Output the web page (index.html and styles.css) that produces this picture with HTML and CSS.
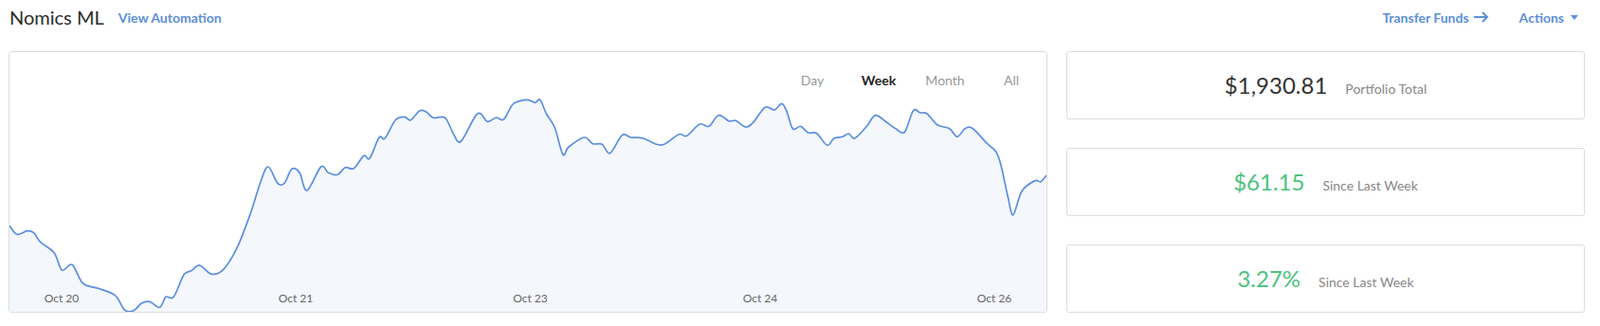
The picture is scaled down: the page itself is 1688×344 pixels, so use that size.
FILE: index.html
```html
<!DOCTYPE html>
<html lang="en">
<head>
  <meta charset="UTF-8">
  <title>Nomics ML</title>
  <link rel="stylesheet" href="styles.css">
</head>
<body>
  <div class="page">
    <header class="topbar">
      <h1 class="title">Nomics ML</h1>
      <a class="link view-link" href="#">View Automation</a>
      <div class="topbar-right">
        <a class="link transfer" href="#">Transfer Funds
          <svg width="16" height="12" viewBox="0 0 16 12"><path d="M0 6H14M9 1L14 6L9 11" fill="none" stroke="#5b8fdc" stroke-width="2"/></svg>
        </a>
        <a class="link actions" href="#">Actions <span class="caret"></span></a>
      </div>
    </header>

    <div class="grid">
      <div class="chart">
        <svg class="chart-svg" viewBox="0 0 1094 274" preserveAspectRatio="none">
          <path class="area" d=""/>
          <path class="line" d="M0 183.3 L7.9 192.3 L18.6 188.7 L25.7 190.7 L32.9 200.7 L47.1 211.7 L55.4 230 L66.1 224.3 L77.5 244 L93.6 249.3 L111.4 256.7 L121.4 272 L131.1 272.7 L139.3 265 L147.9 263.3 L158.6 269.3 L165 258.3 L173.2 258.3 L183.9 235 L191.8 230.7 L200.7 225 L213.2 234.3 L225.7 229.3 L240 206.7 L254.3 170 L265 136.7 L272.9 121 L282.9 138.3 L290 138.3 L297.9 123.3 L306.1 127.3 L313.9 146 L328.6 121 L336.4 127.3 L346.1 129.3 L354.3 121.7 L363.2 122.7 L373.9 109.3 L380 112 L390 90 L396.1 91 L407.1 71.7 L416.8 68.3 L423.2 71.7 L432.9 61.7 L440 63.3 L447.1 69.3 L459.6 69.3 L468.6 86.7 L476.4 94 L493.6 65 L504.3 73.3 L513.2 69 L521.4 71 L531.1 55 L541.8 50.7 L548.2 50.7 L554.7 53.3 L559.8 50.3 L566.4 65 L575.4 80 L583.8 108 L590 100 L606.3 90 L615.4 96.7 L625.2 97.3 L633.6 106.7 L646.3 87.7 L655.4 90 L668.1 90.7 L682.7 97.3 L691.8 96.7 L706.3 86.7 L714.7 88.3 L728.1 76 L737.9 78.3 L748.1 66.7 L759 72.7 L766.3 72.3 L776.5 79 L784.5 74.3 L797.2 58.3 L807 61 L814.6 54.3 L819.7 61.7 L826.3 80.7 L834.6 78.3 L842.6 85 L851.7 85.7 L862.6 98.3 L869.9 91 L879 89.3 L885.5 86 L891.7 91 L904.4 78.3 L913.5 66.7 L924.4 73.3 L935.3 81 L944.4 84.3 L953.5 61.7 L960.8 64 L968 65 L978.9 76.7 L991.7 80.7 L1000 89.3 L1008 80.7 L1016.4 80.7 L1031.6 96.7 L1040.7 105 L1046.2 120 L1053.5 153.3 L1058.9 171.7 L1068 146.7 L1081.8 135.7 L1088 136.7 L1094 130"/>
          <g class="axis">
            <text x="55" y="264">Oct 20</text>
            <text x="302" y="264">Oct 21</text>
            <text x="549.5" y="264">Oct 23</text>
            <text x="792" y="264">Oct 24</text>
            <text x="1039" y="264">Oct 26</text>
          </g>
        </svg>
        <nav class="periods">
          <a class="period" href="#">Day</a>
          <a class="period active" href="#">Week</a>
          <a class="period" href="#">Month</a>
          <a class="period" href="#">All</a>
        </nav>
      </div>

      <div class="stats">
        <div class="stat">
          <span class="stat-value">$1,930.81</span>
          <span class="stat-label">Portfolio Total</span>
        </div>
        <div class="stat">
          <span class="stat-value up">$61.15</span>
          <span class="stat-label">Since Last Week</span>
        </div>
        <div class="stat">
          <span class="stat-value up">3.27%</span>
          <span class="stat-label">Since Last Week</span>
        </div>
      </div>
    </div>
  </div>
  <script src="chart.js"></script>
</body>
</html>
```

FILE: styles.css
```css
body{
  margin:0;
  font-family:Lato,"Open Sans",sans-serif;
  color:#333;
  background:#fff;
}

.page{
  padding:0 16px 0 9px;
}

/* Kopfzeile */
.topbar{
  display:flex;
  align-items:center;
  height:54px;
  padding-bottom:18px;
  box-sizing:border-box;
}
.title{
  margin:0 0 0 1px;
  font-size:20px;
  font-weight:400;
  color:#2b2b2b;
}
.link{
  color:#5b8fdc;
  font-size:14px;
  font-weight:700;
  text-decoration:none;
}
.view-link{
  margin-left:15px;
}
.topbar-right{
  margin-left:auto;
  margin-right:7px;
  display:flex;
  align-items:center;
}
.transfer{
  display:flex;
  align-items:center;
  gap:5px;
}
.actions{
  margin-left:32px;
  display:flex;
  align-items:center;
  gap:3px;
}
.caret{
  width:0;
  height:0;
  margin-left:4px;
  border-left:4.5px solid transparent;
  border-right:4.5px solid transparent;
  border-top:5px solid #5b8fdc;
}

/* Raster: Chart links, Kennzahlen rechts */
.grid{
  display:grid;
  grid-template-columns:1096px 1fr;
  gap:20px;
  height:276px;
}

.chart{
  position:relative;
  border:1px solid #ddd;
  border-radius:3px;
  overflow:hidden;
}
.chart-svg{
  display:block;
  width:100%;
  height:100%;
}
.area{
  fill:#f4f7fc;
}
.line{
  fill:none;
  stroke:#5b8fe0;
  stroke-width:1.7;
  stroke-linejoin:round;
}
.axis text{
  font-family:Lato,sans-serif;
  font-size:12px;
  fill:#666;
  text-anchor:middle;
}

.periods{
  position:absolute;
  top:20px;
  right:2px;
  display:flex;
}
.period{
  width:70px;
  text-align:center;
  font-size:14px;
  line-height:20px;
  color:#999;
  text-decoration:none;
}
.period.active{
  color:#222;
  font-weight:700;
}

.stats{
  display:flex;
  flex-direction:column;
  justify-content:space-between;
}
.stat{
  height:72px;
  box-sizing:border-box;
  border:1px solid #ddd;
  border-radius:3px;
  display:flex;
  justify-content:center;
  align-items:baseline;
  gap:19px;
  padding-top:20px;
}
.stat-value{
  font-size:24px;
  line-height:29px;
  color:#333;
}
.stat-value.up{
  color:#4cc27d;
}
.stat-label{
  font-size:14px;
  color:#888;
}
```

FILE: chart.js
```js
// Linienzug aus dem Pfad lesen und als Catmull-Rom-Kurve glätten
var line = document.querySelector('.line');
var area = document.querySelector('.area');
var nums = line.getAttribute('d').match(/-?[\d.]+/g).map(Number);
var pts = [];
for (var i = 0; i < nums.length; i += 2) {
  pts.push([nums[i], nums[i + 1]]);
}

var d = 'M' + pts[0][0] + ' ' + pts[0][1];
for (var i = 0; i < pts.length - 1; i++) {
  var p0 = pts[i - 1] || pts[i];
  var p1 = pts[i];
  var p2 = pts[i + 1];
  var p3 = pts[i + 2] || p2;
  var c1x = p1[0] + (p2[0] - p0[0]) / 6;
  var c1y = p1[1] + (p2[1] - p0[1]) / 6;
  var c2x = p2[0] - (p3[0] - p1[0]) / 6;
  var c2y = p2[1] - (p3[1] - p1[1]) / 6;
  d += ' C' + c1x.toFixed(1) + ' ' + c1y.toFixed(1) + ' ' +
       c2x.toFixed(1) + ' ' + c2y.toFixed(1) + ' ' + p2[0] + ' ' + p2[1];
}

line.setAttribute('d', d);
area.setAttribute('d', d + ' L1094 274 L0 274 Z');
```
